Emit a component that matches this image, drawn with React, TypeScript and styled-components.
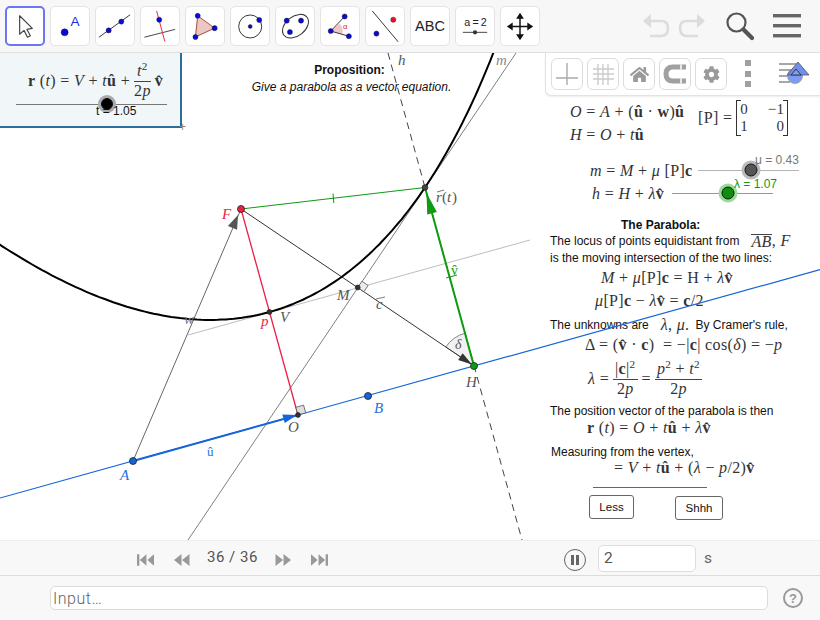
import React from 'react';
import styled, { createGlobalStyle } from 'styled-components';
import { FaCog, FaHome } from 'react-icons/fa';

const serif = `'Liberation Serif', 'DejaVu Serif', serif`;
const sans = `'Liberation Sans', Arial, sans-serif`;

const GlobalStyle = createGlobalStyle`
  html, body { margin: 0; padding: 0; background: #fff; }
  * { box-sizing: border-box; }
`;

const Page = styled.div`
  width: 820px;
  height: 620px;
  display: flex;
  flex-direction: column;
  overflow: hidden;
  font-family: ${sans};
`;

/* ---- top toolbar ---- */
const Toolbar = styled.div`
  height: 53px;
  flex: none;
  display: flex;
  align-items: center;
  padding: 0 0 1px 5px;
  background: #f7f7f7;
  border-bottom: 1px solid #dfdfdf;
`;

const ToolButton = styled.div<{ $active?: boolean }>`
  width: 40px;
  height: 40px;
  margin-right: 5px;
  flex: none;
  display: flex;
  background: #fff;
  border-radius: 5px;
  border: ${(p) => (p.$active ? '2px solid #6a78f0' : '1px solid #e4e4e4')};
  align-items: center;
  justify-content: center;
`;

const ToolbarRight = styled.div`
  margin-left: auto;
  display: flex;
  align-items: center;
  padding-right: 19px;
`;

const Ico = styled.svg<{ $left?: number }>`
  display: block;
  flex: none;
  margin-left: ${(p) => p.$left || 0}px;
`;

const IcoText = styled.text<{ $size: number; $fill?: string }>`
  font-family: ${sans};
  font-size: ${(p) => p.$size}px;
  fill: ${(p) => p.$fill || '#222'};
`;

const dot = (x: number, y: number, fill = '#0a0ad8', r = 2.6) => (
  <circle cx={x} cy={y} r={r} fill={fill} stroke="#222" strokeWidth="0.5" />
);

const tools = [
  <path d="M14 9 L14 28 L18.5 24 L22 31 L25 29.5 L21.5 23 L27 22 Z" fill="#fff" stroke="#444" strokeWidth="1.2" strokeLinejoin="round" />,
  <>
    <circle cx="14" cy="26" r="3.6" fill="#0a0ad8" stroke="#222" strokeWidth="0.5" />
    <IcoText x="20" y="20" $size={14} $fill="#1a2ae0">A</IcoText>
  </>,
  <>
    <line x1="3" y1="31" x2="35" y2="8" stroke="#333" strokeWidth="1" />
    {dot(13, 24)}
    {dot(26, 15)}
  </>,
  <>
    <line x1="3.5" y1="31" x2="35" y2="23" stroke="#444" strokeWidth="1" />
    <line x1="16" y1="4" x2="24.5" y2="35.5" stroke="#ee2244" strokeWidth="1" />
    {dot(18.7, 13)}
  </>,
  <>
    <polygon points="12,9 29.4,21.7 9.7,30.7" fill="#ecc8c2" stroke="#a5483c" strokeWidth="1" />
    {dot(12, 9)}
    {dot(29.4, 21.7)}
    {dot(9.7, 30.7)}
  </>,
  <>
    <circle cx="19.7" cy="20" r="11.8" fill="none" stroke="#333" strokeWidth="1" />
    {dot(19.7, 20, '#0a0ad8', 2)}
    {dot(29, 13.3)}
  </>,
  <>
    <ellipse cx="20" cy="19.7" rx="15" ry="10" transform="rotate(-38 20 19.7)" fill="none" stroke="#333" strokeWidth="1" />
    {dot(11, 14)}
    {dot(25.7, 14)}
    {dot(14.3, 25.7)}
  </>,
  <>
    <path d="M10 24.7 L19 17 A12 12 0 0 1 22 28 Z" fill="#f3c6c6" />
    <line x1="10" y1="24.7" x2="24.3" y2="9.7" stroke="#333" strokeWidth="1" />
    <line x1="10" y1="24.7" x2="28.6" y2="30" stroke="#333" strokeWidth="1" />
    {dot(10, 24.7)}
    {dot(24.3, 9.7)}
    {dot(28.6, 30)}
    <IcoText x="22.5" y="23" $size={8} $fill="#e2223c">α</IcoText>
  </>,
  <>
    <line x1="6.4" y1="4" x2="33" y2="35.7" stroke="#333" strokeWidth="1" />
    {dot(28, 13, '#e8112d')}
    {dot(10.7, 27.3)}
  </>,
];

const AbcLabel = styled.span`
  font-size: 14.5px;
  color: #222;
`;

/* ---- canvas ---- */
const Canvas = styled.div`
  position: relative;
  flex: 1;
  background: #fff;
  overflow: hidden;
`;

const Drawing = styled.svg`
  position: absolute;
  left: 0;
  top: 0;
  z-index: 1;
  pointer-events: none;
`;

const Label = styled.text<{ $color?: string; $size?: number; $upright?: boolean }>`
  font-family: ${serif};
  font-size: ${(p) => p.$size || 15}px;
  font-style: ${(p) => (p.$upright ? 'normal' : 'italic')};
  fill: ${(p) => p.$color || '#555'};
`;

const SlidePanel = styled.div`
  position: absolute;
  left: 0;
  top: 0;
  z-index: 2;
  width: 182px;
  height: 75px;
  padding: 8px 0 0 16px;
  background: #f1f7f9;
  border-right: 2px solid #2b6f9a;
  border-bottom: 2px solid #2b6f9a;
`;

const CornerMark = styled.span`
  position: absolute;
  right: -6px;
  bottom: -7px;
  font-size: 12px;
  line-height: 12px;
  color: #888;
`;

const Tex = styled.span<{ $gap?: number }>`
  font-family: ${serif};
  font-size: 16px;
  letter-spacing: 0.35px;
  margin-left: ${(p) => p.$gap || 0}px;
  color: #333;
  white-space: pre;
  display: inline-flex;
  align-items: center;
`;

const Var = styled.i``;
const Bf = styled.b``;

const Frac = styled.span`
  display: inline-flex;
  flex-direction: column;
  align-items: center;
  margin: 0 4px;
  line-height: 1.12;
`;

const Num = styled.span`
  border-bottom: 1px solid #444;
  padding: 0 2px 1px;
  align-self: stretch;
  text-align: center;
`;

const Sup = styled.sup`
  font-size: 0.7em;
  line-height: 0;
`;

const PanelFormula = styled.div`
  height: 40px;
  padding-left: 12px;
  display: flex;
  align-items: center;
`;

const SliderSlot = styled.div<{ $width: number }>`
  width: ${(p) => p.$width}px;
  flex: none;
`;

const SliderTrack = styled.div<{ $width: number; $color: string; $top?: number }>`
  position: relative;
  width: ${(p) => p.$width}px;
  height: 1px;
  margin-top: ${(p) => p.$top || 0}px;
  flex: none;
  background: ${(p) => p.$color};
`;

const Knob = styled.span<{ $at: number; $color: string; $halo: string; $size: number }>`
  position: absolute;
  left: ${(p) => p.$at}px;
  top: 0;
  width: ${(p) => p.$size}px;
  height: ${(p) => p.$size}px;
  transform: translate(-50%, -50%);
  border-radius: 50%;
  background: ${(p) => p.$color};
  border: 1px solid #111;
  box-shadow: 0 0 0 3px ${(p) => p.$halo};
`;

const SliderText = styled.span<{ $x: number; $y: number; $color: string }>`
  position: absolute;
  left: ${(p) => p.$x}px;
  top: ${(p) => p.$y}px;
  font-size: 12px;
  line-height: 12px;
  color: ${(p) => p.$color};
  white-space: nowrap;
`;

const Proposition = styled.div`
  position: absolute;
  left: 250px;
  top: 10px;
  width: 203px;
  text-align: center;
  font-size: 12px;
  color: #111;
`;

const PropTitle = styled.div`
  font-weight: bold;
  line-height: 14px;
  padding-right: 4px;
`;

const PropLine = styled.div`
  font-style: italic;
  line-height: 14px;
  margin-top: 3px;
  white-space: nowrap;
`;

/* ---- right column of notes ---- */
const Notes = styled.div`
  position: absolute;
  left: 550px;
  top: 47px;
  width: 270px;
  display: flex;
  flex-direction: column;
`;

const Row = styled.div<{ $h: number; $x?: number; $top?: number }>`
  height: ${(p) => p.$h}px;
  padding-left: ${(p) => p.$x || 0}px;
  margin-top: ${(p) => p.$top || 0}px;
  display: flex;
  align-items: center;
  flex: none;
  white-space: nowrap;
`;

const Prose = styled.span<{ $gap?: number }>`
  font-size: 12px;
  color: #111;
  margin-left: ${(p) => p.$gap || 0}px;
`;

const NoteTitle = styled.span`
  font-size: 12px;
  font-weight: bold;
  color: #111;
`;

const DefsBlock = styled.div`
  display: flex;
  height: 46px;
  flex: none;
`;

const DefsColumn = styled.div`
  width: 148px;
  padding-left: 20px;
  display: flex;
  flex-direction: column;
`;

const MatrixWrap = styled.div`
  display: flex;
  align-items: center;
  height: 36px;
`;

const Matrix = styled.span`
  display: inline-grid;
  grid-template-columns: 20px 24px;
  margin-left: 4px;
  height: 36px;
  align-content: center;
  padding: 0 3px;
  position: relative;
  border-left: 1px solid #333;
  border-right: 1px solid #333;
  line-height: 17px;
  font-size: 15px;
  &::before {
    content: '';
    position: absolute;
    left: 0;
    right: 0;
    height: 36px;
    top: 0;
    background:
      linear-gradient(#333, #333) left top / 4px 1px no-repeat,
      linear-gradient(#333, #333) right top / 4px 1px no-repeat,
      linear-gradient(#333, #333) left bottom / 4px 1px no-repeat,
      linear-gradient(#333, #333) right bottom / 4px 1px no-repeat;
  }
`;

const Cell = styled.span`
  text-align: right;
  &:nth-child(odd) { text-align: left; }
`;

const Over = styled.span`
  border-top: 1px solid #444;
  line-height: 14px;
`;

const Rule = styled.div`
  width: 114px;
  height: 1px;
  margin: 11px 0 0 43px;
  background: #666;
  flex: none;
`;

const ButtonsRow = styled.div`
  display: flex;
  margin: 7px 0 0 39px;
  align-items: flex-start;
`;

const NoteButton = styled.div<{ $width: number; $gap?: number; $down?: number }>`
  width: ${(p) => p.$width}px;
  height: 24px;
  margin-left: ${(p) => p.$gap || 0}px;
  margin-top: ${(p) => p.$down || 0}px;
  display: flex;
  align-items: center;
  justify-content: center;
  border: 1.5px solid #666;
  border-radius: 3px;
  background: #fff;
  font-size: 11.5px;
  color: #111;
`;

/* ---- style bar popup ---- */
const StyleBar = styled.div`
  position: absolute;
  left: 545px;
  top: 0;
  right: -4px;
  height: 43px;
  z-index: 3;
  display: flex;
  align-items: flex-start;
  padding: 5px 0 0 5px;
  background: #fff;
  border: 1px solid #e3e3e3;
  border-top: none;
  border-radius: 0 0 0 6px;
  box-shadow: 0 1px 2px rgba(0, 0, 0, 0.08);
`;

const StyleButton = styled.div`
  width: 32px;
  height: 32px;
  margin-right: 4px;
  flex: none;
  display: flex;
  align-items: center;
  justify-content: center;
  border: 1px solid #dcdcdc;
  border-radius: 6px;
  color: #9a9a9a;
`;

const Dots = styled.div`
  width: 6px;
  height: 27px;
  margin: 2px 0 0 14px;
  flex: none;
  display: flex;
  flex-direction: column;
  justify-content: space-between;
`;

const DotSquare = styled.span`
  height: 6px;
  background: #a0a0a0;
`;

const ViewIcon = styled.div`
  margin: 3px 0 0 27px;
`;

/* ---- playback bar ---- */
const PlayerBar = styled.div`
  height: 35px;
  flex: none;
  display: flex;
  align-items: center;
  background: #f8f8f8;
  border-top: 1px solid #eeeeee;
  padding-left: 137px;
  color: #666;
`;

const StepBtn = styled.div<{ $gap: number }>`
  margin: 4px ${(p) => p.$gap}px 0 0;
  display: flex;
  flex: none;
`;

const Counter = styled.span`
  font-family: Roboto, ${sans};
  font-size: 15px;
  letter-spacing: 0.5px;
  color: #555;
  width: 68px;
  margin-top: -2px;
  flex: none;
`;

const PauseBtn = styled.div`
  width: 22px;
  height: 22px;
  margin: 4px 0 0 236px;
  flex: none;
  display: flex;
  align-items: center;
  justify-content: center;
  gap: 2px;
  border: 1.5px solid #666;
  border-radius: 50%;
`;

const PauseBar = styled.span`
  width: 3px;
  height: 10px;
  background: #666;
`;

const SecondsBox = styled.div`
  width: 98px;
  height: 27px;
  margin-left: 12px;
  padding: 0 5px;
  flex: none;
  display: flex;
  align-items: center;
  background: #fff;
  border: 1px solid #dedede;
  border-radius: 5px;
  font-family: Roboto, ${sans};
  font-size: 15.5px;
  color: #555;
`;

const Unit = styled.span`
  margin-left: 8px;
  font-family: Roboto, ${sans};
  font-size: 15.5px;
  color: #666;
`;

/* ---- input bar ---- */
const InputBar = styled.div`
  height: 45px;
  flex: none;
  display: flex;
  align-items: center;
  padding: 0 16px 0 50px;
  background: #f8f8f8;
  border-top: 1px solid #dcdcdc;
`;

const InputField = styled.div`
  width: 718px;
  height: 24px;
  padding-left: 2px;
  display: flex;
  align-items: center;
  background: #fff;
  border: 1px solid #dcdcdc;
  border-radius: 5px;
  font-family: Roboto, ${sans};
  font-size: 16px;
  letter-spacing: 0.5px;
  font-weight: 300;
  color: #666;
`;

const HelpBtn = styled.div`
  width: 20px;
  height: 20px;
  margin-left: 15px;
  flex: none;
  display: flex;
  align-items: center;
  justify-content: center;
  border: 2px solid #999;
  border-radius: 50%;
  font-size: 13px;
  font-weight: bold;
  color: #999;
`;

/* ---- geometry, in canvas coordinates (canvas starts at y = 53) ---- */
const Y = 53;
const pt = (x: number, y: number): [number, number] => [x, y - Y];
const A = pt(133, 461);
const B = pt(368, 396);
const O = pt(298, 415);
const H = pt(474, 366);
const F = pt(241, 209);
const Vx = pt(269.5, 312);
const M = pt(357.7, 287.5);
const R = pt(425, 187.5);
const u = [0.9636, -0.2674];
const v = [-0.2667, -0.9638];
const focal = 213.7;

const parabola = () => {
  const out: string[] = [];
  for (let t = -300; t <= 300; t += 4) {
    const k = (t * t) / (2 * focal);
    out.push(`${(Vx[0] + t * u[0] + k * v[0]).toFixed(1)},${(Vx[1] + t * u[1] + k * v[1]).toFixed(1)}`);
  }
  return out.join(' ');
};

const seg = (a: number[], b: number[], stroke: string, width = 1, dash?: string) => (
  <line x1={a[0]} y1={a[1]} x2={b[0]} y2={b[1]} stroke={stroke} strokeWidth={width} strokeDasharray={dash} />
);

// arrow head with its tip at `tip`, coming from `from`
const head = (from: number[], tip: number[], fill: string, len = 16, half = 4.5) => {
  const dx = tip[0] - from[0];
  const dy = tip[1] - from[1];
  const d = Math.hypot(dx, dy);
  const ux = dx / d;
  const uy = dy / d;
  const bx = tip[0] - ux * len;
  const by = tip[1] - uy * len;
  return (
    <polygon
      points={`${tip[0]},${tip[1]} ${bx - uy * half},${by + ux * half} ${bx + uy * half},${by - ux * half}`}
      fill={fill}
    />
  );
};

const point = (p: number[], fill: string, r = 3.5) => (
  <circle cx={p[0]} cy={p[1]} r={r} fill={fill} stroke="#222" strokeWidth="0.8" />
);

const square = (p: number[], a: number[], b: number[], s: number, fill: string) => (
  <polygon
    points={`${p[0]},${p[1]} ${p[0] + a[0] * s},${p[1] + a[1] * s} ${p[0] + (a[0] + b[0]) * s},${p[1] + (a[1] + b[1]) * s} ${p[0] + b[0] * s},${p[1] + b[1] * s}`}
    fill={fill}
    stroke="#555"
    strokeWidth="0.8"
  />
);

const BLUE = '#1565d8';
const GREEN = '#0f9a12';
const RED = '#ee1f47';

const GeoDrawing = () => (
  <Drawing width="820" height="487" viewBox="0 0 820 487">
    {seg(pt(188, 335), pt(530, 240), '#bdbdbd')}
    {seg(pt(188, 540), pt(516, 53), '#808080')}
    {seg(pt(388, 53), pt(522, 540), '#444', 1, '7 5')}
    <path d={`M${H[0] - 28.2},${H[1] - 19} A34 34 0 0 1 ${H[0] - 9},${H[1] - 32.8} L${H[0]},${H[1]} Z`} fill="#f1f1f1" stroke="#555" strokeWidth="0.7" />
    {seg(A, F, '#666')}
    {head(A, pt(238, 215), '#555', 14, 5)}
    {seg(F, H, '#333')}
    {head(F, pt(472, 364.5), '#333', 14, 4)}
    {seg(pt(0, 498), pt(820, 269.6), BLUE, 1.2)}
    {seg(A, O, BLUE, 2)}
    {head(A, pt(297, 415), BLUE, 14, 4.5)}
    {seg(F, O, RED, 1.3)}
    {seg(F, R, GREEN)}
    {seg(pt(333, 193.5), pt(333.8, 203), GREEN)}
    {seg(H, R, GREEN, 2)}
    {head(H, pt(426.5, 193), GREEN, 21, 5)}
    {seg(pt(446, 278), pt(457, 275), GREEN)}
    {square(O, u, v, 8, '#dedede')}
    {square(M, [0.83, 0.56], [0.56, -0.83], 7.5, '#ececec')}
    <polyline points={parabola()} fill="none" stroke="#000" strokeWidth="2" />

    {point(A, BLUE)}
    {point(B, BLUE)}
    {point(O, '#333', 2.4)}
    {point(Vx, '#333', 2.4)}
    {point(M, '#333', 2.4)}
    {point(R, '#444', 2.8)}
    {point(F, RED)}
    {point(H, GREEN)}

    <Label x={120} y={427} $color="#2a6fdc">A</Label>
    <Label x={374} y={360} $color="#2a6fdc">B</Label>
    <Label x={222} y={166} $color={RED}>F</Label>
    <Label x={261} y={273} $color={RED}>p</Label>
    <Label x={280} y={269}>V</Label>
    <Label x={337} y={247}>M</Label>
    <Label x={184} y={271} $color="#777">w</Label>
    <Label x={288} y={379}>O</Label>
    <Label x={466} y={334}>H</Label>
    <Label x={376} y={256}>c</Label>
    {seg(pt(376, 299), pt(385, 297), '#555', 0.8)}
    <Label x={436} y={149}>r</Label>
    {seg(pt(437, 192), pt(444, 190), '#555', 0.8)}
    <Label x={442} y={149} $upright>(</Label>
    <Label x={447} y={149}>t</Label>
    <Label x={452} y={149} $upright>)</Label>
    <Label x={207} y={403} $color="#2a6fdc" $upright $size={13}>û</Label>
    <Label x={451} y={222} $color={GREEN} $upright $size={14}>v̂</Label>
    <Label x={455} y={296} $size={14}>δ</Label>
    <Label x={398} y={12} $size={15}>h</Label>
    <Label x={496} y={12} $color="#888" $size={15}>m</Label>
  </Drawing>
);

export default function App() {
  return (
    <Page>
      <GlobalStyle />
      <Toolbar>
        {tools.map((icon, i) => (
          <ToolButton key={i} $active={i === 0}>
            <Ico width="38" height="38" viewBox="0 0 39 39">{icon}</Ico>
          </ToolButton>
        ))}
        <ToolButton><AbcLabel>ABC</AbcLabel></ToolButton>
        <ToolButton>
          <Ico width="38" height="38" viewBox="0 0 39 39">
            <IcoText x="8.5" y="19" $size={11}>{'a\u2009=\u20092'}</IcoText>
            <line x1="7" y1="26" x2="32" y2="26" stroke="#444" strokeWidth="1" />
            <circle cx="19.5" cy="26" r="2.2" fill="#333" />
          </Ico>
        </ToolButton>
        <ToolButton>
          <Ico width="38" height="38" viewBox="0 0 39 39">
            <path d="M19.5 8 V32 M8 20 H31" stroke="#111" strokeWidth="1.5" />
            <path d="M19.5 6 L15.5 12 H23.5 Z M19.5 34 L15.5 28 H23.5 Z M6 20 L12 16 V24 Z M33 20 L27 16 V24 Z" fill="#111" />
          </Ico>
        </ToolButton>
        <ToolbarRight>
          <Ico width="64" height="28" viewBox="0 0 64 28">
            <path d="M2 9 H19 Q26 9 26 16 Q26 24 19 24 H8" fill="none" stroke="#dcdcdc" strokeWidth="2.6" />
            <path d="M9 2 L1 9 L9 16 Z" fill="#dcdcdc" />
            <path d="M62 9 H45 Q38 9 38 16 Q38 24 45 24 H56" fill="none" stroke="#dcdcdc" strokeWidth="2.6" />
            <path d="M55 2 L63 9 L55 16 Z" fill="#dcdcdc" />
          </Ico>
          <Ico width="30" height="30" viewBox="0 0 30 30" $left={19}>
            <circle cx="11.5" cy="11.5" r="9" fill="none" stroke="#555" strokeWidth="2.2" />
            <line x1="18.5" y1="18.5" x2="27" y2="27" stroke="#555" strokeWidth="4.2" strokeLinecap="round" />
          </Ico>
          <Ico width="28" height="24" viewBox="0 0 28 24" $left={18}>
            <rect x="0" y="0" width="28" height="3.4" fill="#666" />
            <rect x="0" y="10" width="28" height="3.4" fill="#666" />
            <rect x="0" y="20" width="28" height="3.4" fill="#666" />
          </Ico>
        </ToolbarRight>
      </Toolbar>

      <Canvas>
        <Notes>
          <DefsBlock>
            <DefsColumn>
              <Row $h={23}><Tex><Var>O</Var> = <Var>A</Var> + (<Bf>û</Bf> · <Bf>w</Bf>)<Bf>û</Bf></Tex></Row>
              <Row $h={23}><Tex><Var>H</Var> = <Var>O</Var> + <Var>t</Var><Bf>û</Bf></Tex></Row>
            </DefsColumn>
            <MatrixWrap>
              <Tex>[P] =</Tex>
              <Tex>
                <Matrix>
                  <Cell>0</Cell><Cell>−1</Cell>
                  <Cell>1</Cell><Cell>0</Cell>
                </Matrix>
              </Tex>
            </MatrixWrap>
          </DefsBlock>

          <Row $h={23} $x={40} $top={13}>
            <SliderSlot $width={108}>
              <Tex><Var>m</Var> = <Var>M</Var> + <Var>μ</Var> [P]<Bf>c</Bf></Tex>
            </SliderSlot>
            <SliderTrack $width={101} $color="#b5b5b5">
              <Knob $at={53} $color="#555" $halo="#bbb" $size={13} />
              <SliderText $x={57} $y={-16} $color="#777">μ = 0.43</SliderText>
            </SliderTrack>
          </Row>
          <Row $h={23} $x={42}>
            <SliderSlot $width={80}>
              <Tex><Var>h</Var> = <Var>H</Var> + <Var>λ</Var><Bf>v̂</Bf></Tex>
            </SliderSlot>
            <SliderTrack $width={101} $color="#5cc05c">
              <Knob $at={56} $color="#0c8f0c" $halo="#9bdc9b" $size={13} />
              <SliderText $x={62} $y={-15} $color={GREEN}>λ = 1.07</SliderText>
            </SliderTrack>
          </Row>

          <Row $h={16} $x={71} $top={12}><NoteTitle>The Parabola:</NoteTitle></Row>
          <Row $h={16}>
            <Prose>The locus of points equidistant from</Prose>
            <Tex $gap={12}><Over><Var>AB</Var></Over>, <Var>F</Var></Tex>
          </Row>
          <Row $h={18}><Prose>is the moving intersection of the two lines:</Prose></Row>
          <Row $h={22} $x={51}><Tex><Var>M</Var> + <Var>μ</Var>[P]<Bf>c</Bf> = H + <Var>λ</Var><Bf>v̂</Bf></Tex></Row>
          <Row $h={24} $x={45}><Tex><Var>μ</Var>[P]<Bf>c</Bf> − <Var>λ</Var><Bf>v̂</Bf> = <Bf>c</Bf>/2</Tex></Row>
          <Row $h={24}>
            <Prose>The unknowns are</Prose>
            <Tex $gap={12}><Var>λ</Var>, <Var>μ</Var>.</Tex>
            <Prose $gap={6}>By Cramer's rule,</Prose>
          </Row>
          <Row $h={16} $x={35}>
            <Tex>Δ = (<Bf>v̂</Bf> · <Bf>c</Bf>)  = −|<Bf>c</Bf>| cos(<Var>δ</Var>) = −<Var>p</Var></Tex>
          </Row>
          <Row $h={52} $x={38}>
            <Tex>
              <Var>λ</Var> =
              <Frac><Num>|<Bf>c</Bf>|<Sup>2</Sup></Num><span>2<Var>p</Var></span></Frac>
              =
              <Frac><Num><Var>p</Var><Sup>2</Sup> + <Var>t</Var><Sup>2</Sup></Num><span>2<Var>p</Var></span></Frac>
            </Tex>
          </Row>
          <Row $h={12}><Prose>The position vector of the parabola is then</Prose></Row>
          <Row $h={22} $x={37}><Tex><Bf>r</Bf> (<Var>t</Var>) = <Var>O</Var> + <Var>t</Var><Bf>û</Bf> + <Var>λ</Var><Bf>v̂</Bf></Tex></Row>
          <Row $h={16} $x={1} $top={5}><Prose>Measuring from the vertex,</Prose></Row>
          <Row $h={16} $x={64}><Tex>= <Var>V</Var> + <Var>t</Var><Bf>û</Bf> + (<Var>λ</Var> − <Var>p</Var>/2)<Bf>v̂</Bf></Tex></Row>
          <Rule />
          <ButtonsRow>
            <NoteButton $width={45}>Less</NoteButton>
            <NoteButton $width={48} $gap={41} $down={1}>Shhh</NoteButton>
          </ButtonsRow>
        </Notes>

        <Proposition>
          <PropTitle>Proposition:</PropTitle>
          <PropLine>Give a parabola as a vector equation.</PropLine>
        </Proposition>

        <GeoDrawing />

        <SlidePanel>
          <PanelFormula>
            <Tex>
              <Bf>r</Bf> (<Var>t</Var>) = <Var>V</Var> + <Var>t</Var><Bf>û</Bf> +
              <Frac><Num><Var>t</Var><Sup>2</Sup></Num><span>2<Var>p</Var></span></Frac>
              <Bf>v̂</Bf>
            </Tex>
          </PanelFormula>
          <SliderTrack $width={151} $color="#777" $top={3}>
            <Knob $at={91} $color="#000" $halo="#aaa" $size={12} />
            <SliderText $x={80} $y={1} $color="#111">t = 1.05</SliderText>
          </SliderTrack>
          <CornerMark>+</CornerMark>
        </SlidePanel>

        <StyleBar>
          <StyleButton>
            <Ico width="30" height="30" viewBox="0 0 30 30">
              <path d="M15 4 V26 M4 19 H26" stroke="#aaa" strokeWidth="1.4" />
            </Ico>
          </StyleButton>
          <StyleButton>
            <Ico width="30" height="30" viewBox="0 0 30 30">
              <path d="M10 5 V26 M15 5 V26 M20 5 V26 M5 10 H26 M5 15 H26 M5 20 H26" stroke="#ccc" strokeWidth="1.4" />
            </Ico>
          </StyleButton>
          <StyleButton><FaHome size={19} color="#9a9a9a" /></StyleButton>
          <StyleButton>
            <Ico width="30" height="30" viewBox="0 0 30 30">
              <path d="M26 8 H13 Q6 8 6 15 Q6 22 13 22 H26" fill="none" stroke="#a0a0a0" strokeWidth="5" />
              <path d="M21 5.5 V10.5 M21 19.5 V24.5" stroke="#fff" strokeWidth="1.5" />
            </Ico>
          </StyleButton>
          <StyleButton><FaCog size={17} color="#9a9a9a" /></StyleButton>
          <Dots><DotSquare /><DotSquare /><DotSquare /></Dots>
          <ViewIcon>
            <Ico width="32" height="26" viewBox="0 0 32 26">
              <path d="M1 3 H20 M1 9 H16 M1 15 H12 M1 21 H12" stroke="#a8a8a8" strokeWidth="2" />
              <circle cx="17" cy="15" r="7.5" fill="#7f9cf0" stroke="#999" strokeWidth="0.8" />
              <polygon points="20,1 31,14 9,14" fill="#6f8fe8" stroke="#555" strokeWidth="0.8" />
              <polygon points="18,8 23,14 13,14" fill="#7f9cf0" stroke="#223" strokeWidth="0.8" />
            </Ico>
          </ViewIcon>
        </StyleBar>
      </Canvas>

      <PlayerBar>
        <StepBtn $gap={19}>
          <Ico width="17" height="12" viewBox="0 0 18 12">
            <path d="M0 0 H2.5 V12 H0 Z M10 0 V12 L3 6 Z M18 0 V12 L11 6 Z" fill="#999" />
          </Ico>
        </StepBtn>
        <StepBtn $gap={17}>
          <Ico width="17" height="12" viewBox="0 0 17 12">
            <path d="M8.5 0 V12 L1 6 Z M16.5 0 V12 L9 6 Z" fill="#999" />
          </Ico>
        </StepBtn>
        <Counter>36 / 36</Counter>
        <StepBtn $gap={19}>
          <Ico width="17" height="12" viewBox="0 0 17 12">
            <path d="M0.5 0 V12 L8 6 Z M8.5 0 V12 L16 6 Z" fill="#999" />
          </Ico>
        </StepBtn>
        <StepBtn $gap={0}>
          <Ico width="17" height="12" viewBox="0 0 18 12">
            <path d="M0 0 V12 L7 6 Z M8 0 V12 L15 6 Z M15.5 0 H18 V12 H15.5 Z" fill="#999" />
          </Ico>
        </StepBtn>
        <PauseBtn><PauseBar /><PauseBar /></PauseBtn>
        <SecondsBox>2</SecondsBox>
        <Unit>s</Unit>
      </PlayerBar>

      <InputBar>
        <InputField>Input…</InputField>
        <HelpBtn>?</HelpBtn>
      </InputBar>
    </Page>
  );
}
